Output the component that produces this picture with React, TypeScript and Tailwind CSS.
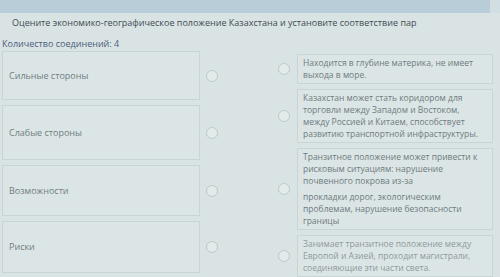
import React from 'react';

interface Option {
  id: number;
  text: string;
}

const leftItems = [
  { id: 1, label: 'Сильные стороны', h: 'h-[49px]' },
  { id: 2, label: 'Слабые стороны', h: 'h-[55px]' },
  { id: 3, label: 'Возможности', h: 'h-[51px]' },
  { id: 4, label: 'Риски', h: 'h-[52px]' },
];

const rightItems: Option[] = [
  { id: 1, text: 'Находится в глубине материка, не имеет выхода в море.' },
  {
    id: 2,
    text: 'Казахстан может стать коридором для торговли между Западом и Востоком, между Россией и Китаем, способствует развитию транспортной инфраструктуры.',
  },
  { id: 3, text: '' },
  {
    id: 4,
    text: 'Занимает транзитное положение между Европой и Азией, проходит магистрали, соединяющие эти части света.',
  },
];

const Radio: React.FC = () => (
  <div className="w-[12px] h-[12px] rounded-full border border-[#bccaca] bg-[#e3eaea] shrink-0" />
);

const App: React.FC = () => {
  return (
    <div
      className="w-[500px] h-[277px] overflow-hidden bg-[#d9e3e3] text-[#6d7b80]"
      style={{ fontFamily: '"Open Sans", "Noto Sans", sans-serif' }}
    >
      <div className="flex">
        <div className="w-[490px] h-[13px] bg-[#b9cdd8]" />
        <div className="flex-1 h-[13px] bg-[#d2dfe2]" />
      </div>

      <div className="pl-[12px] pt-[4px] text-[9px] leading-[11px] text-[#3e4b54]">
        Оцените экономико-географическое положение Казахстана и установите соответствие пар
      </div>
      <div className="pl-[2px] pt-[10px] text-[9px] leading-[11px] text-[#4c5b7d]">
        Количество соединений: 4
      </div>

      <div className="flex pl-[2px] pt-[2px]">
        {/* left column */}
        <div className="flex flex-col gap-[5px] w-[216px]">
          {leftItems.map((item) => (
            <div key={item.id} className="flex items-center">
              <div
                className={`w-[198px] ${item.h} border border-[#c9d4d4] bg-[#dce5e5] flex items-center pl-[6px] text-[9px] text-[#707d82]`}
              >
                {item.label}
              </div>
              <div className="ml-[6px]">
                <Radio />
              </div>
            </div>
          ))}
        </div>

        {/* right column */}
        <div className="flex flex-col gap-[5px] pl-[60px] pt-[3px]">
          {rightItems.map((item) => (
            <div key={item.id} className="flex items-center">
              <Radio />
              <div className="ml-[7px] w-[196px] border border-[#c9d4d4] bg-[#dce5e5] px-[5px] py-[2px] text-[8.5px] leading-[12px]">
                {item.id === 3 ? (
                  <>
                    <p>
                      Транзитное положение может привести к рисковым ситуациям: нарушение почвенного покрова из-за
                    </p>
                    <p className="mt-[4px]">
                      прокладки дорог, экологическим проблемам, нарушение безопасности границы
                    </p>
                  </>
                ) : (
                  <p className={item.id === 4 ? 'text-[#8c9a9e]' : ''}>{item.text}</p>
                )}
              </div>
            </div>
          ))}
        </div>
      </div>
    </div>
  );
};

export default App;
